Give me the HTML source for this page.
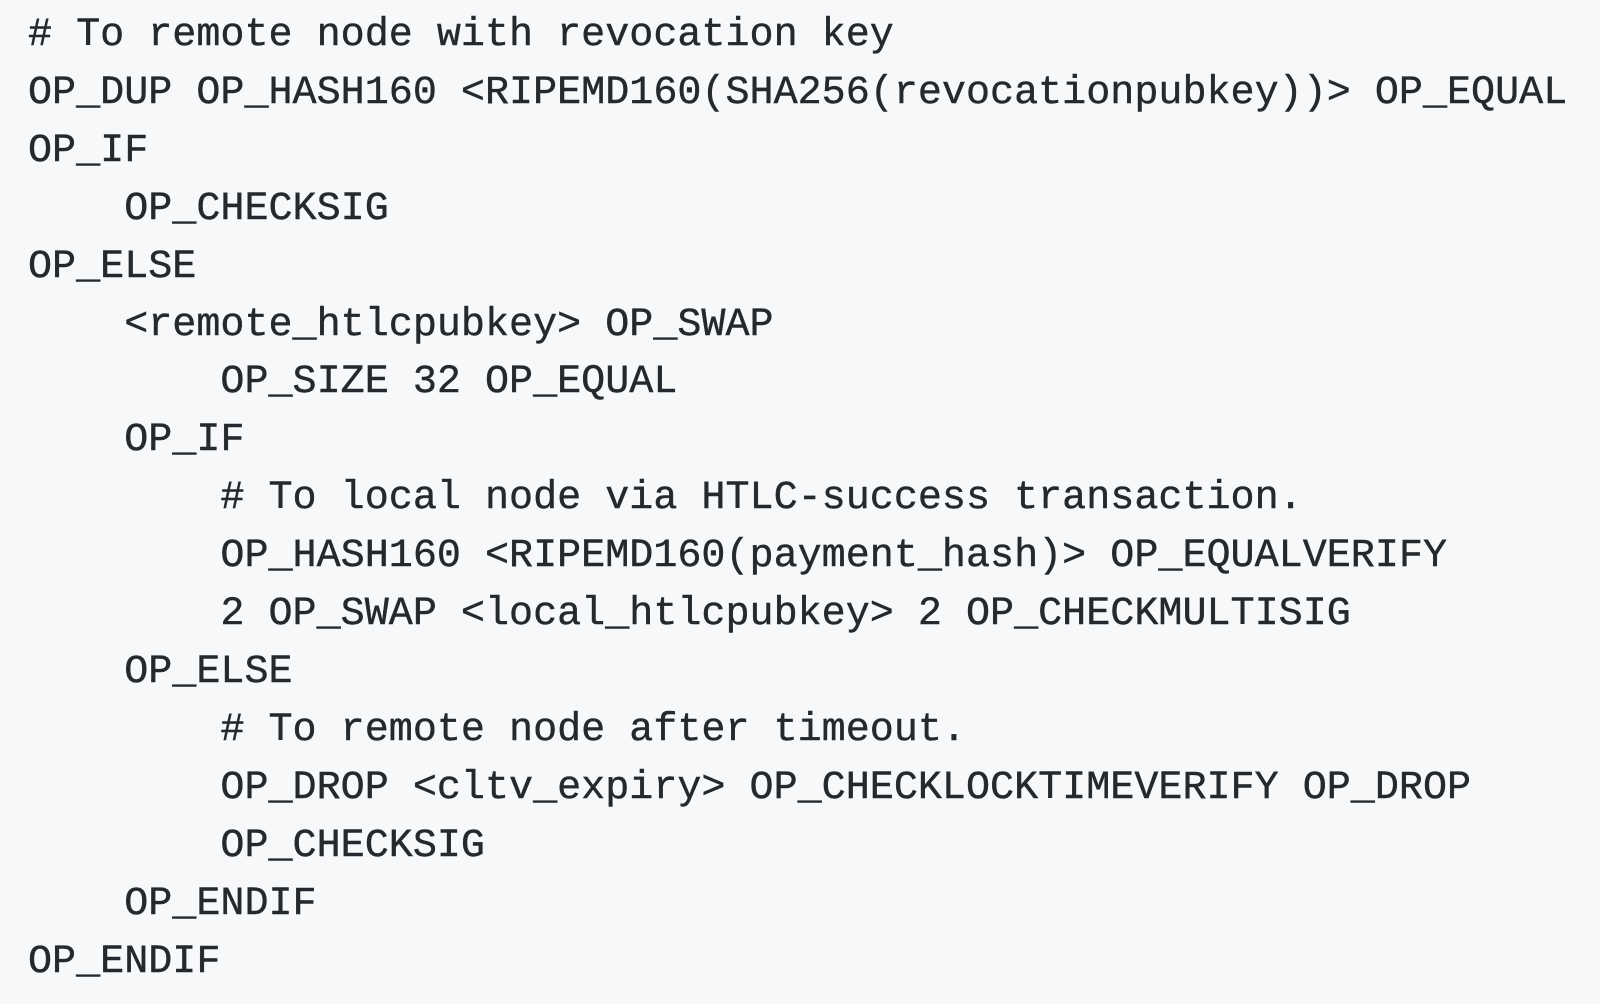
<!DOCTYPE html>
<html><head><meta charset="utf-8"><style>
html,body{margin:0;padding:0;background:#f6f8fa;width:1600px;height:1004px;overflow:hidden}
pre{position:absolute;left:28px;top:7px;margin:0;font-family:"Liberation Mono",monospace;font-size:40.1px;line-height:57.9px;color:#24292e;white-space:pre;-webkit-text-stroke:0.4px #24292e}
</style></head><body><pre># To remote node with revocation key
OP_DUP OP_HASH160 &lt;RIPEMD160(SHA256(revocationpubkey))&gt; OP_EQUAL
OP_IF
    OP_CHECKSIG
OP_ELSE
    &lt;remote_htlcpubkey&gt; OP_SWAP
        OP_SIZE 32 OP_EQUAL
    OP_IF
        # To local node via HTLC-success transaction.
        OP_HASH160 &lt;RIPEMD160(payment_hash)&gt; OP_EQUALVERIFY
        2 OP_SWAP &lt;local_htlcpubkey&gt; 2 OP_CHECKMULTISIG
    OP_ELSE
        # To remote node after timeout.
        OP_DROP &lt;cltv_expiry&gt; OP_CHECKLOCKTIMEVERIFY OP_DROP
        OP_CHECKSIG
    OP_ENDIF
OP_ENDIF</pre></body></html>
